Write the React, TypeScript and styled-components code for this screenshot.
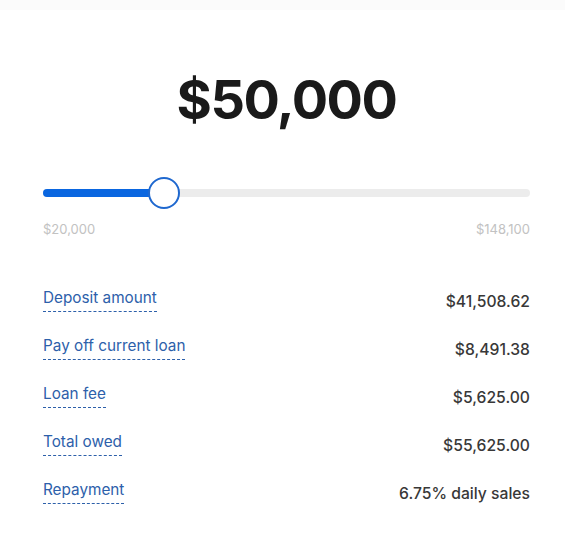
import React from "react";
import styled, { createGlobalStyle } from "styled-components";

const Global = createGlobalStyle`
  html, body { margin: 0; padding: 0; background: #ffffff; }
  body { font-family: Inter, "Noto Sans", sans-serif; }
`;

const TopStrip = styled.div`
  height: 10px;
  background: #fbfbfb;
`;

const Panel = styled.main`
  padding: 0 35px 0 43px;
  display: flex;
  flex-direction: column;
`;

const Amount = styled.h1`
  margin: 62px 0 0;
  text-align: center;
  font-family: Inter, sans-serif;
  font-weight: 700;
  font-size: 54px;
  line-height: 56px;
  letter-spacing: -1.5px;
  color: #1a1a1a;
`;

const SliderWrap = styled.div`
  margin-top: 49px;
  position: relative;
  height: 32px;
  display: flex;
  align-items: center;
`;

const Track = styled.div`
  width: 100%;
  height: 8px;
  border-radius: 4px;
  background: #ececec;
  position: relative;
`;

const Fill = styled.div`
  height: 100%;
  border-radius: 4px;
  background: #0a66e0;
`;

const Thumb = styled.div`
  position: absolute;
  top: 0;
  width: 32px;
  height: 32px;
  box-sizing: border-box;
  border-radius: 50%;
  border: 2px solid #1f68cf;
  background: #ffffff;
  transform: translateX(-50%);
`;

const Range = styled.div`
  margin-top: 12px;
  display: flex;
  justify-content: space-between;
  font-size: 13px;
  color: #c2c2c2;
  font-family: Inter, sans-serif;
`;

const List = styled.dl`
  margin: 51px 0 0;
  display: flex;
  flex-direction: column;
  gap: 16px;
`;

const Row = styled.div`
  display: flex;
  justify-content: space-between;
  align-items: flex-start;
  height: 32px;
`;

const Term = styled.dt`
  font-size: 15.3px;
  line-height: 20px;
  color: #2d60aa;
  padding-bottom: 3px;
  border-bottom: 1px dashed #2d60aa;
`;

const Value = styled.dd`
  margin: 0;
  font-size: 15.7px;
  line-height: 20px;
  font-weight: 500;
  color: #383838;
  padding-top: 4px;
`;

const rows: [string, string][] = [
  ["Deposit amount", "$41,508.62"],
  ["Pay off current loan", "$8,491.38"],
  ["Loan fee", "$5,625.00"],
  ["Total owed", "$55,625.00"],
  ["Repayment", "6.75% daily sales"],
];

export default function App() {
  const pct = ((164 - 43) / (530 - 43)) * 100;
  return (
    <>
      <Global />
      <TopStrip />
      <Panel>
        <Amount>$50,000</Amount>
        <SliderWrap>
          <Track>
            <Fill style={{ width: `${pct}%` }} />
          </Track>
          <Thumb style={{ left: `${pct}%` }} />
        </SliderWrap>
        <Range>
          <span>$20,000</span>
          <span>$148,100</span>
        </Range>
        <List>
          {rows.map(([k, v]) => (
            <Row key={k}>
              <Term>{k}</Term>
              <Value>{v}</Value>
            </Row>
          ))}
        </List>
      </Panel>
    </>
  );
}
